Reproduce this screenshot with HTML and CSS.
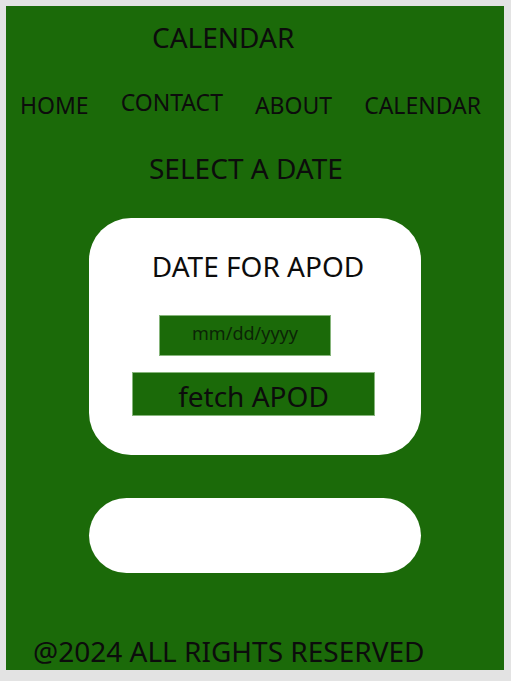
FILE: index.html
```html
<!DOCTYPE html>
<html lang="en">
<head>
<meta charset="utf-8">
<title>Calendar</title>
<link rel="stylesheet" href="styles.css">
</head>
<body>
<div class="page">
  <h1 class="title">CALENDAR</h1>
  <nav class="nav">
    <a class="nav-link" href="#">HOME</a>
    <a class="nav-link nav-link-raised" href="#">CONTACT</a>
    <a class="nav-link" href="#">ABOUT</a>
    <a class="nav-link" href="#">CALENDAR</a>
  </nav>
  <h2 class="subtitle">SELECT A DATE</h2>
  <section class="card">
    <h3 class="card-title">DATE FOR APOD</h3>
    <input class="date-input" type="text" placeholder="mm/dd/yyyy">
    <button class="fetch-btn" type="button">fetch APOD</button>
  </section>
  <section class="result"></section>
  <footer class="footer">@2024 ALL RIGHTS RESERVED</footer>
</div>
</body>
</html>
```

FILE: styles.css
```css
html, body {
  margin: 0;
  padding: 0;
}

body {
  background: #e3e3e3;
  padding: 6px;
  font-family: "Noto Sans", "Open Sans", sans-serif;
  color: #0c0c0c;
}

.page {
  width: 498px;
  height: 664px;
  box-sizing: border-box;
  background: #1b6a09;
  padding-top: 12px;
  overflow: hidden;
}

.title {
  margin: 0 0 0 146px;
  font-size: 28px;
  font-weight: 400;
  line-height: 38px;
}

.nav {
  display: flex;
  align-items: flex-start;
  gap: 32px;
  margin-top: 31px;
  padding-left: 14px;
}

.nav-link {
  color: #0c0c0c;
  text-decoration: none;
  font-size: 23px;
  line-height: 31px;
  padding-top: 3px;
}

.nav-link-raised {
  padding-top: 0;
}

.subtitle {
  margin: 28px 0 0 143px;
  font-size: 28px;
  font-weight: 400;
  line-height: 38px;
}

.card {
  width: 332px;
  height: 237px;
  box-sizing: border-box;
  margin: 31px auto 0;
  background: #ffffff;
  border-radius: 42px;
  padding-top: 29px;
  display: flex;
  flex-direction: column;
  align-items: flex-start;
}

.card-title {
  align-self: stretch;
  margin: 0 0 0 6px;
  text-align: center;
  font-size: 28px;
  font-weight: 400;
  line-height: 38px;
}

.date-input {
  margin: 30px 0 0 70px;
  width: 172px;
  height: 41px;
  box-sizing: border-box;
  background: #1b6a09;
  border: 1px solid #86b57b;
  padding: 0 0 5px;
  font-family: "Noto Sans", "Open Sans", sans-serif;
  font-size: 18px;
  text-align: center;
  color: #0b2406;
  outline: none;
}

.date-input::placeholder {
  color: #0b2406;
  opacity: 1;
}

.fetch-btn {
  margin: 16px 0 0 43px;
  width: 243px;
  height: 44px;
  box-sizing: border-box;
  background: #1b6a09;
  border: 1px solid #86b57b;
  padding: 3px 0 0;
  font-family: "Noto Sans", "Open Sans", sans-serif;
  font-size: 28px;
  line-height: 36px;
  color: #0c0c0c;
}

.result {
  width: 332px;
  height: 75px;
  margin: 43px auto 0;
  background: #ffffff;
  border-radius: 38px;
}

.footer {
  margin-top: 59px;
  padding-left: 27px;
  font-size: 28px;
  line-height: 38px;
}
```
